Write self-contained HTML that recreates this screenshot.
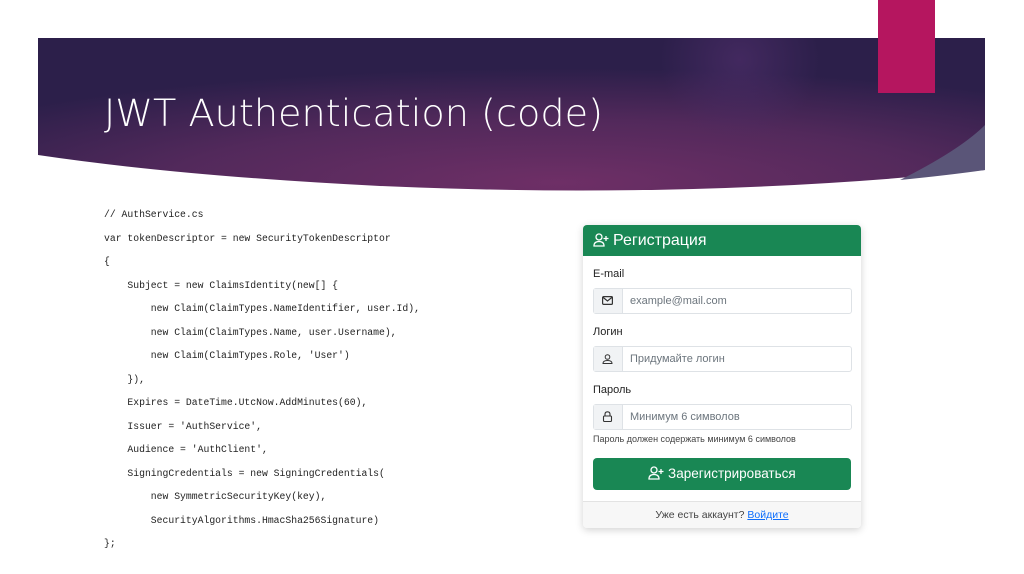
<!DOCTYPE html>
<html><head><meta charset="utf-8"><style>
body{margin:0;width:1024px;height:574px;background:#fff;position:relative;overflow:hidden;font-family:"Liberation Sans",sans-serif}
.code{position:absolute;left:104px;top:203px;font-family:"Liberation Mono",monospace;font-size:9.75px;color:#222;line-height:23.5px;white-space:pre}
.card{position:absolute;left:583px;top:225px;width:278px;height:303px;border-radius:4px;box-shadow:0 2px 8px rgba(0,0,0,.18);background:#fff;overflow:hidden}
.hd{background:#198754;color:#fff;height:31px;font-size:16px;line-height:31px;padding-left:30px;position:relative}
.lbl{position:absolute;left:10px;font-size:11px;color:#222}
.inp{position:absolute;left:10px;width:257px;height:24px;border:1px solid #dee2e6;border-radius:3px;font-size:11px;color:#6c757d}
.inp .ic{position:absolute;left:0;top:0;width:28px;height:24px;background:#f1f3f5;border-right:1px solid #dee2e6}
.inp .ic svg{position:absolute;left:8px;top:7px}
.inp span.t{position:absolute;left:36px;top:0;line-height:24px}
</style></head><body>
<svg style="position:absolute;left:0;top:0" width="1024" height="200">
<defs><radialGradient id="g" cx="0.55" cy="0.95" r="0.75"><stop offset="0" stop-color="#6e2f66"/><stop offset="0.55" stop-color="#52295b"/><stop offset="1" stop-color="#2c1f4a"/></radialGradient>
<radialGradient id="h" gradientUnits="userSpaceOnUse" cx="740" cy="60" r="80"><stop offset="0" stop-color="#4c2d68" stop-opacity="0.7"/><stop offset="1" stop-color="#4c2d68" stop-opacity="0"/></radialGradient></defs>
<path d="M38 38 H985 V170 Q700 200 380 186 Q180 176 38 155 Z" fill="url(#g)"/>
<path d="M38 38 H985 V170 Q700 200 380 186 Q180 176 38 155 Z" fill="url(#h)"/>
<path d="M985 125 Q960 150 900 180 Q950 175 985 170 Z" fill="#5a5578"/>
<rect x="878" y="0" width="57" height="93" fill="#b5165f"/>
<text x="104" y="126" font-family="DejaVu Sans" font-size="37" fill="#fff" font-weight="200" textLength="499" lengthAdjust="spacingAndGlyphs">JWT Authentication (code)</text>
</svg>
<div class="code">// AuthService.cs
var tokenDescriptor = new SecurityTokenDescriptor
{
    Subject = new ClaimsIdentity(new[] {
        new Claim(ClaimTypes.NameIdentifier, user.Id),
        new Claim(ClaimTypes.Name, user.Username),
        new Claim(ClaimTypes.Role, 'User')
    }),
    Expires = DateTime.UtcNow.AddMinutes(60),
    Issuer = 'AuthService',
    Audience = 'AuthClient',
    SigningCredentials = new SigningCredentials(
        new SymmetricSecurityKey(key),
        SecurityAlgorithms.HmacSha256Signature)
};</div>
<div class="card">
<div class="hd"><svg style="position:absolute;left:10px;top:8px" width="16" height="14" fill="none" stroke="#fff" stroke-width="1.3"><circle cx="6" cy="4" r="3"/><path d="M1 13 Q1 8.5 6 8.5 Q11 8.5 11 13 Z"/><path d="M13 3 V8 M10.5 5.5 H15.5"/></svg>Регистрация</div>
<div class="lbl" style="top:43px">E-mail</div>
<div class="inp" style="top:63px"><div class="ic"><svg width="11" height="9" fill="none" stroke="#333" stroke-width="1.2"><rect x="0.6" y="0.6" width="9.8" height="7.8" rx="1"/><path d="M0.6 1 L5.5 5 L10.4 1"/></svg></div><span class="t">example@mail.com</span></div>
<div class="lbl" style="top:101px">Логин</div>
<div class="inp" style="top:121px"><div class="ic"><svg width="11" height="10" fill="none" stroke="#333" stroke-width="1"><circle cx="5.5" cy="3" r="2.3"/><path d="M1 9.5 Q1 6.5 5.5 6.5 Q10 6.5 10 9.5 Z"/></svg></div><span class="t">Придумайте логин</span></div>
<div class="lbl" style="top:159px">Пароль</div>
<div class="inp" style="top:179px"><div class="ic"><svg width="11" height="11" style="top:6px" fill="none" stroke="#333" stroke-width="1.1"><path d="M3 5 V3.3 Q3 0.8 5.5 0.8 Q8 0.8 8 3.3 V5"/><rect x="1.5" y="5" width="8" height="5.5" rx="1"/></svg></div><span class="t">Минимум 6 символов</span></div>
<div class="lbl" style="top:209px;font-size:9px;color:#444">Пароль должен содержать минимум 6 символов</div>
<div style="position:absolute;left:10px;top:233px;width:258px;height:32px;background:#198754;border-radius:4px;color:#fff;font-size:13.5px;text-align:center;line-height:32px"><svg style="vertical-align:-2px" width="16" height="14" fill="none" stroke="#fff" stroke-width="1.3"><circle cx="6" cy="4" r="3"/><path d="M1 13 Q1 8.5 6 8.5 Q11 8.5 11 13 Z"/><path d="M13 3 V8 M10.5 5.5 H15.5"/></svg> Зарегистрироваться</div>
<div style="position:absolute;left:0;top:276px;width:278px;height:27px;background:#f7f7f7;border-top:1px solid #e3e3e3;font-size:10.5px;color:#444;text-align:center;line-height:27px">Уже есть аккаунт? <u style="color:#0d6efd">Войдите</u></div>
</div>
</body></html>
